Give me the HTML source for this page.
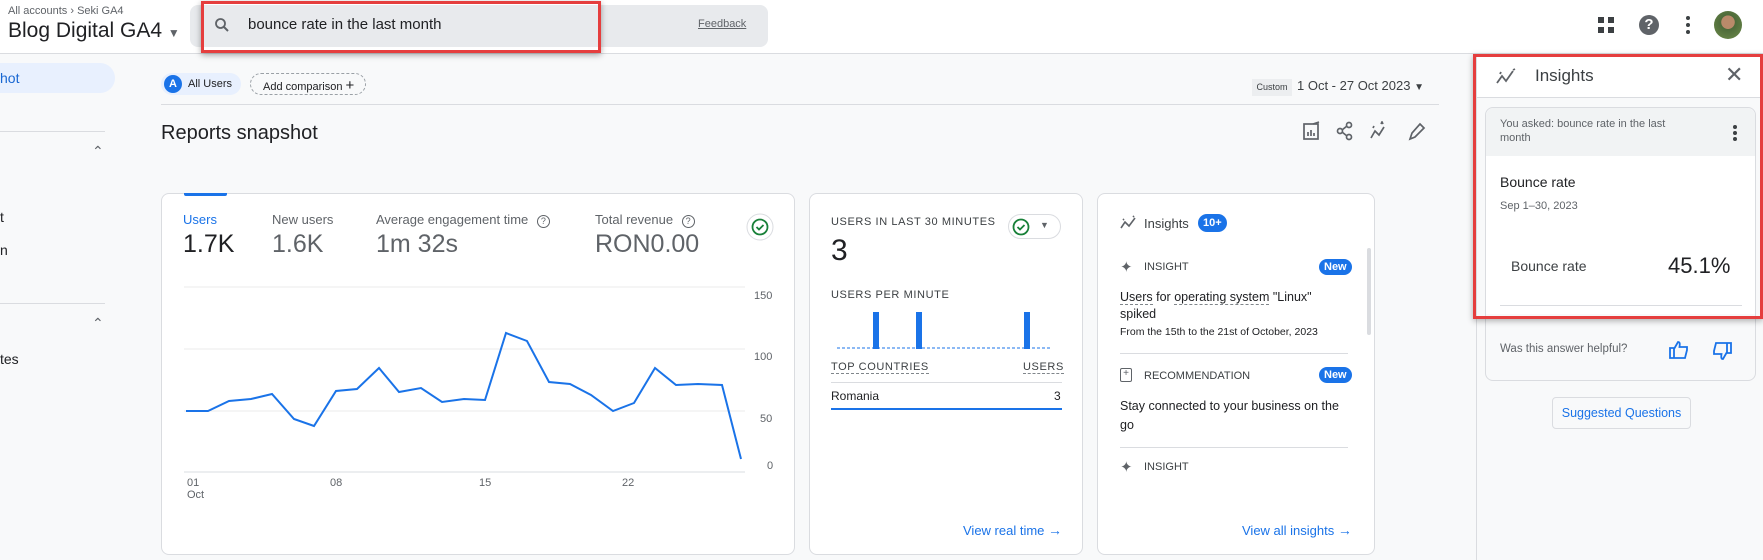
<!DOCTYPE html>
<html><head><meta charset="utf-8">
<style>
*{box-sizing:border-box;margin:0;padding:0}
body{width:1763px;height:560px;overflow:hidden;background:#f8f9fa;font-family:"Liberation Sans",Arial,sans-serif;color:#202124;position:relative}
.a{position:absolute;white-space:nowrap}
.card{position:absolute;background:#fff;border:1px solid #dadce0;border-radius:8px}
.g{color:#5f6368}
.blue{color:#1a73e8}
.new{position:absolute;background:#1a73e8;color:#fff;font-size:11px;font-weight:bold;border-radius:9px;padding:2px 5px}
</style></head><body>
<!-- top bar -->
<div class="a" style="left:0;top:0;width:1763px;height:54px;background:#fff;border-bottom:1px solid #dadce0"></div>
<div class="a g" style="left:8px;top:5px;font-size:11px">All accounts › Seki GA4</div>
<div class="a" style="left:8px;top:19px;font-size:21px;color:#202124">Blog Digital GA4 <span style="font-size:12px;color:#5f6368">▼</span></div>
<div class="a" style="left:190px;top:5px;width:578px;height:42px;background:#e8eaed;border-radius:8px"></div>
<div class="a" style="left:201px;top:1px;width:400px;height:52px;border:3px solid #e53e3e;box-shadow:0 2px 6px rgba(0,0,0,.35)"></div>
<svg class="a" style="left:213px;top:16px" width="18" height="18" viewBox="0 0 24 24"><circle cx="10" cy="10" r="6" fill="none" stroke="#5f6368" stroke-width="2.4"/><path d="M14.5 14.5L20 20" stroke="#5f6368" stroke-width="2.6"/></svg>
<div class="a" style="left:248px;top:16px;font-size:15px">bounce rate in the last month</div>
<div class="a g" style="left:698px;top:18px;font-size:11px;text-decoration:underline">Feedback</div>
<svg class="a" style="left:1597px;top:16px" width="18" height="18" viewBox="0 0 18 18" fill="#3c4043"><rect x="1" y="1" width="6" height="6"/><rect x="11" y="1" width="6" height="6"/><rect x="1" y="11" width="6" height="6"/><rect x="11" y="11" width="6" height="6"/></svg>
<div class="a" style="left:1639px;top:15px;width:20px;height:20px;border-radius:50%;background:#5f6368;color:#fff;font-size:15px;font-weight:bold;text-align:center;line-height:20px">?</div>
<svg class="a" style="left:1684px;top:15px" width="8" height="20"><circle cx="4" cy="3" r="2" fill="#3c4043"/><circle cx="4" cy="10" r="2" fill="#3c4043"/><circle cx="4" cy="17" r="2" fill="#3c4043"/></svg>
<div class="a" style="left:1714px;top:11px;width:28px;height:28px;border-radius:50%;background:radial-gradient(circle at 50% 40%,#b98a6a 0 30%,#4d6a3a 32%,#6e8b4a 100%)"></div>
<!-- sidebar -->
<div class="a" style="left:-20px;top:63px;width:135px;height:30px;background:#e8f0fe;border-radius:15px"></div>
<div class="a" style="left:0;top:70px;font-size:14px;color:#1967d2">hot</div>
<div class="a" style="left:0;top:131px;width:105px;height:1px;background:#dadce0"></div>
<div class="a g" style="left:92px;top:143px;font-size:14px">⌃</div>
<div class="a" style="left:0;top:209px;font-size:14px">t</div>
<div class="a" style="left:0;top:242px;font-size:14px">n</div>
<div class="a" style="left:0;top:303px;width:105px;height:1px;background:#dadce0"></div>
<div class="a g" style="left:92px;top:315px;font-size:14px">⌃</div>
<div class="a" style="left:0;top:351px;font-size:14px">tes</div>
<!-- main header -->
<div class="a" style="left:161px;top:73px;width:80px;height:22px;background:#e8f0fe;border-radius:11px"></div>
<div class="a" style="left:164px;top:75px;width:18px;height:18px;border-radius:50%;background:#1a73e8;color:#fff;font-size:11px;font-weight:bold;text-align:center;line-height:18px">A</div>
<div class="a" style="left:188px;top:78px;font-size:11px">All Users</div>
<div class="a" style="left:250px;top:73px;width:116px;height:22px;border:1px dashed #9aa0a6;border-radius:11px;font-size:11px;padding:3px 0 0 12px">Add comparison <span style="font-size:15px;position:relative;top:0px">+</span></div>
<div class="a" style="left:161px;top:104px;width:1278px;height:1px;background:#dadce0"></div>
<div class="a" style="left:1252px;top:79px;width:40px;height:17px;background:#eceef0;font-size:9px;text-align:center;line-height:17px;color:#3c4043">Custom</div>
<div class="a" style="left:1297px;top:78px;font-size:13px;color:#3c4043">1 Oct - 27 Oct 2023 <span style="font-size:10px">▼</span></div>
<div class="a" style="left:161px;top:122px;font-size:20px">Reports snapshot</div>
<svg class="a" style="left:1302px;top:121px" width="130" height="20" viewBox="0 0 130 20" fill="none" stroke="#5f6368" stroke-width="1.7"><rect x="2" y="3" width="14" height="15"/><path d="M6 15v-4M9 15v-6M12 15v-3M11 3l6-2"/><circle cx="47" cy="4" r="2.5"/><circle cx="38" cy="10" r="2.5"/><circle cx="47" cy="16" r="2.5"/><path d="M40 9l5-4M40 11l5 4"/><path d="M69 17l4-7 4 4 5-8M79 3l1-2 1 2M71 7l1-2"/><path d="M108 18l2-6 8-9 4 4-9 9z"/></svg>
<!-- card1 -->
<div class="card" style="left:161px;top:193px;width:634px;height:362px"></div>
<div class="a" style="left:184px;top:193px;width:43px;height:3px;background:#1a73e8;border-radius:0 0 2px 2px"></div>
<div class="a blue" style="left:183px;top:212px;font-size:13px">Users</div>
<div class="a" style="left:183px;top:230px;font-size:25px">1.7K</div>
<div class="a g" style="left:272px;top:212px;font-size:13px">New users</div>
<div class="a g" style="left:272px;top:230px;font-size:25px">1.6K</div>
<div class="a g" style="left:376px;top:212px;font-size:13px">Average engagement time <span style="display:inline-block;width:13px;height:13px;border:1.5px solid #5f6368;border-radius:50%;font-size:9px;text-align:center;line-height:10px;margin-left:5px">?</span></div>
<div class="a g" style="left:376px;top:230px;font-size:25px">1m 32s</div>
<div class="a g" style="left:595px;top:212px;font-size:13px">Total revenue <span style="display:inline-block;width:13px;height:13px;border:1.5px solid #5f6368;border-radius:50%;font-size:9px;text-align:center;line-height:10px;margin-left:5px">?</span></div>
<div class="a g" style="left:595px;top:230px;font-size:25px">RON0.00</div>
<svg class="a" style="left:746px;top:213px" width="28" height="28"><circle cx="14" cy="14" r="13" fill="#fff" stroke="#dadce0"/><circle cx="14" cy="14" r="7.5" fill="none" stroke="#188038" stroke-width="1.8"/><path d="M10.5 14l2.5 2.5 4.5-4.5" fill="none" stroke="#188038" stroke-width="1.8"/></svg>
<!-- card2 -->
<div class="card" style="left:809px;top:193px;width:274px;height:362px"></div>
<div class="a" style="left:831px;top:216px;font-size:11px;letter-spacing:.6px;color:#3c4043">USERS IN LAST 30 MINUTES</div>
<div class="a" style="left:831px;top:234px;font-size:30px">3</div>
<div class="a" style="left:1008px;top:214px;width:53px;height:25px;border:1px solid #dadce0;border-radius:13px"></div>
<svg class="a" style="left:1012px;top:218px" width="18" height="18"><circle cx="9" cy="9" r="7.5" fill="none" stroke="#188038" stroke-width="1.8"/><path d="M5.5 9l2.5 2.5 4.5-4.5" fill="none" stroke="#188038" stroke-width="1.8"/></svg>
<div class="a g" style="left:1040px;top:220px;font-size:9px">▼</div>
<div class="a" style="left:831px;top:289px;font-size:11px;letter-spacing:.6px;color:#3c4043">USERS PER MINUTE</div>
<div class="a" style="left:831px;top:361px;font-size:11px;letter-spacing:.6px;color:#3c4043;border-bottom:1px dashed #80868b">TOP COUNTRIES</div>
<div class="a" style="left:1023px;top:361px;font-size:11px;letter-spacing:.6px;color:#3c4043;border-bottom:1px dashed #80868b">USERS</div>
<div class="a" style="left:831px;top:382px;width:231px;height:1px;background:#dadce0"></div>
<div class="a" style="left:831px;top:389px;font-size:12px">Romania</div>
<div class="a" style="left:1054px;top:389px;font-size:12px">3</div>
<div class="a" style="left:831px;top:408px;width:231px;height:2px;background:#1a73e8"></div>
<div class="a blue" style="left:963px;top:522px;font-size:13px">View real time <span style="font-size:14px">→</span></div>
<!-- card3 -->
<div class="card" style="left:1097px;top:193px;width:278px;height:362px"></div>
<svg class="a" style="left:1120px;top:215px" width="18" height="16" fill="none" stroke="#5f6368" stroke-width="1.6"><path d="M1 13l4-6 4 4 6-8M13 2l1-1M3 5l1-1"/></svg>
<div class="a" style="left:1144px;top:216px;font-size:13px;color:#3c4043">Insights</div>
<div class="a" style="left:1198px;top:214px;background:#1a73e8;color:#fff;font-size:11px;font-weight:bold;border-radius:10px;padding:3px 5px">10+</div>
<div class="a g" style="left:1120px;top:258px;font-size:15px">✦</div>
<div class="a" style="left:1144px;top:261px;font-size:11px;color:#3c4043">INSIGHT</div>
<div class="new" style="left:1319px;top:259px">New</div>
<div class="a" style="left:1120px;top:290px;font-size:12.5px"><span style="border-bottom:1px dashed #80868b">Users</span> for <span style="border-bottom:1px dashed #80868b">operating system</span> "Linux"</div>
<div class="a" style="left:1120px;top:307px;font-size:12.5px">spiked</div>
<div class="a" style="left:1120px;top:326px;font-size:10.5px">From the 15th to the 21st of October, 2023</div>
<div class="a" style="left:1120px;top:353px;width:228px;height:1px;background:#dadce0"></div>
<div class="a" style="left:1120px;top:368px;width:12px;height:14px;border:1.5px solid #5f6368;border-radius:2px;font-size:10px;text-align:center;line-height:10px;color:#5f6368">+</div>
<div class="a" style="left:1144px;top:370px;font-size:11px;color:#3c4043">RECOMMENDATION</div>
<div class="new" style="left:1319px;top:367px">New</div>
<div class="a" style="left:1120px;top:399px;font-size:12.5px">Stay connected to your business on the</div>
<div class="a" style="left:1120px;top:418px;font-size:12.5px">go</div>
<div class="a" style="left:1120px;top:447px;width:228px;height:1px;background:#dadce0"></div>
<div class="a g" style="left:1120px;top:458px;font-size:15px">✦</div>
<div class="a" style="left:1144px;top:461px;font-size:11px;color:#3c4043">INSIGHT</div>
<div class="a" style="left:1367px;top:248px;width:4px;height:87px;background:#dadce0;border-radius:2px"></div>
<div class="a blue" style="left:1242px;top:522px;font-size:13px">View all insights <span style="font-size:14px">→</span></div>
<!-- right panel -->
<div class="a" style="left:1476px;top:54px;width:1px;height:506px;background:#dadce0"></div>
<div class="a" style="left:1477px;top:54px;width:286px;height:44px;background:#fff;border-bottom:1px solid #dadce0"></div>
<svg class="a" style="left:1496px;top:68px" width="22" height="18" fill="none" stroke="#5f6368" stroke-width="1.8"><path d="M1 15l5-7 4 5 7-10M17 2l2-1M4 6l1-2"/></svg>
<div class="a" style="left:1535px;top:66px;font-size:17px;color:#3c4043">Insights</div>
<div class="a" style="left:1725px;top:62px;font-size:22px;color:#5f6368">✕</div>
<div class="a" style="left:1485px;top:107px;width:271px;height:274px;background:#f8f9fa;border:1px solid #dadce0;border-radius:8px"></div>
<div class="a" style="left:1486px;top:108px;width:269px;height:48px;background:#f1f3f4;border-radius:8px 8px 0 0"></div>
<div class="a" style="left:1486px;top:156px;width:269px;height:158px;background:#fff"></div>
<div class="a g" style="left:1500px;top:117px;font-size:11px;line-height:14px">You asked: bounce rate in the last<br>month</div>
<svg class="a" style="left:1731px;top:124px" width="8" height="18"><circle cx="4" cy="3" r="2" fill="#3c4043"/><circle cx="4" cy="9" r="2" fill="#3c4043"/><circle cx="4" cy="15" r="2" fill="#3c4043"/></svg>
<div class="a" style="left:1500px;top:174px;font-size:14px">Bounce rate</div>
<div class="a g" style="left:1500px;top:200px;font-size:11px">Sep 1–30, 2023</div>
<div class="a" style="left:1511px;top:258px;font-size:14px;color:#3c4043">Bounce rate</div>
<div class="a" style="left:1668px;top:253px;font-size:22px">45.1%</div>
<div class="a" style="left:1500px;top:305px;width:242px;height:1px;background:#dadce0"></div>
<div class="a" style="left:1473px;top:54px;width:290px;height:265px;border:3px solid #e53e3e;box-shadow:0 2px 6px rgba(0,0,0,.3)"></div>
<div class="a g" style="left:1500px;top:343px;font-size:11.5px">Was this answer helpful?</div>
<svg class="a" style="left:1668px;top:340px" width="22" height="20" fill="none" stroke="#1a73e8" stroke-width="1.8"><path d="M2 8h4v10H2zM6 9l4-7c2 0 2 2 1.5 5H19v3l-2 8H6"/></svg>
<svg class="a" style="left:1711px;top:341px" width="22" height="20" fill="none" stroke="#1a73e8" stroke-width="1.8"><path d="M20 12h-4V2h4zM16 11l-4 7c-2 0-2-2-1.5-5H3V10l2-8h11"/></svg>
<div class="a" style="left:1552px;top:397px;width:139px;height:32px;border:1px solid #dadce0;border-radius:4px;background:#f8f9fa;font-size:12.5px;color:#1a73e8;text-align:center;line-height:30px">Suggested Questions</div>
<!-- chart overlay (on top) -->
<svg class="a" style="left:0;top:0;z-index:5" width="1763" height="560">
<g stroke="#ebebeb" stroke-width="1"><line x1="184" y1="287" x2="745" y2="287"/><line x1="184" y1="349" x2="745" y2="349"/><line x1="184" y1="411" x2="745" y2="411"/></g>
<line x1="184" y1="472" x2="745" y2="472" stroke="#dadce0"/>
<polyline fill="none" stroke="#1a73e8" stroke-width="2" points="186,411 208,411 229,401 251,399 272,394 294,419 314,426 336,391 357,389 379,368 399,392 421,388 442,402 464,399 485,400 506,333 527,341 549,382 570,384 591,395 613,411 634,403 655,368 676,385 698,384 722,385 741,459"/>
<g font-size="11" fill="#5f6368" font-family="Liberation Sans,sans-serif"><text x="754" y="299">150</text><text x="754" y="360">100</text><text x="760" y="422">50</text><text x="767" y="469">0</text>
<text x="187" y="486">01</text><text x="187" y="498">Oct</text><text x="330" y="486">08</text><text x="479" y="486">15</text><text x="622" y="486">22</text></g>
<g fill="#1a73e8"><rect x="873" y="312" width="6" height="37"/><rect x="916" y="312" width="6" height="37"/><rect x="1024" y="312" width="6" height="37"/></g>
<line x1="837" y1="348" x2="1052" y2="348" stroke="#1a73e8" stroke-dasharray="3,2"/>
</svg>
</body></html>
